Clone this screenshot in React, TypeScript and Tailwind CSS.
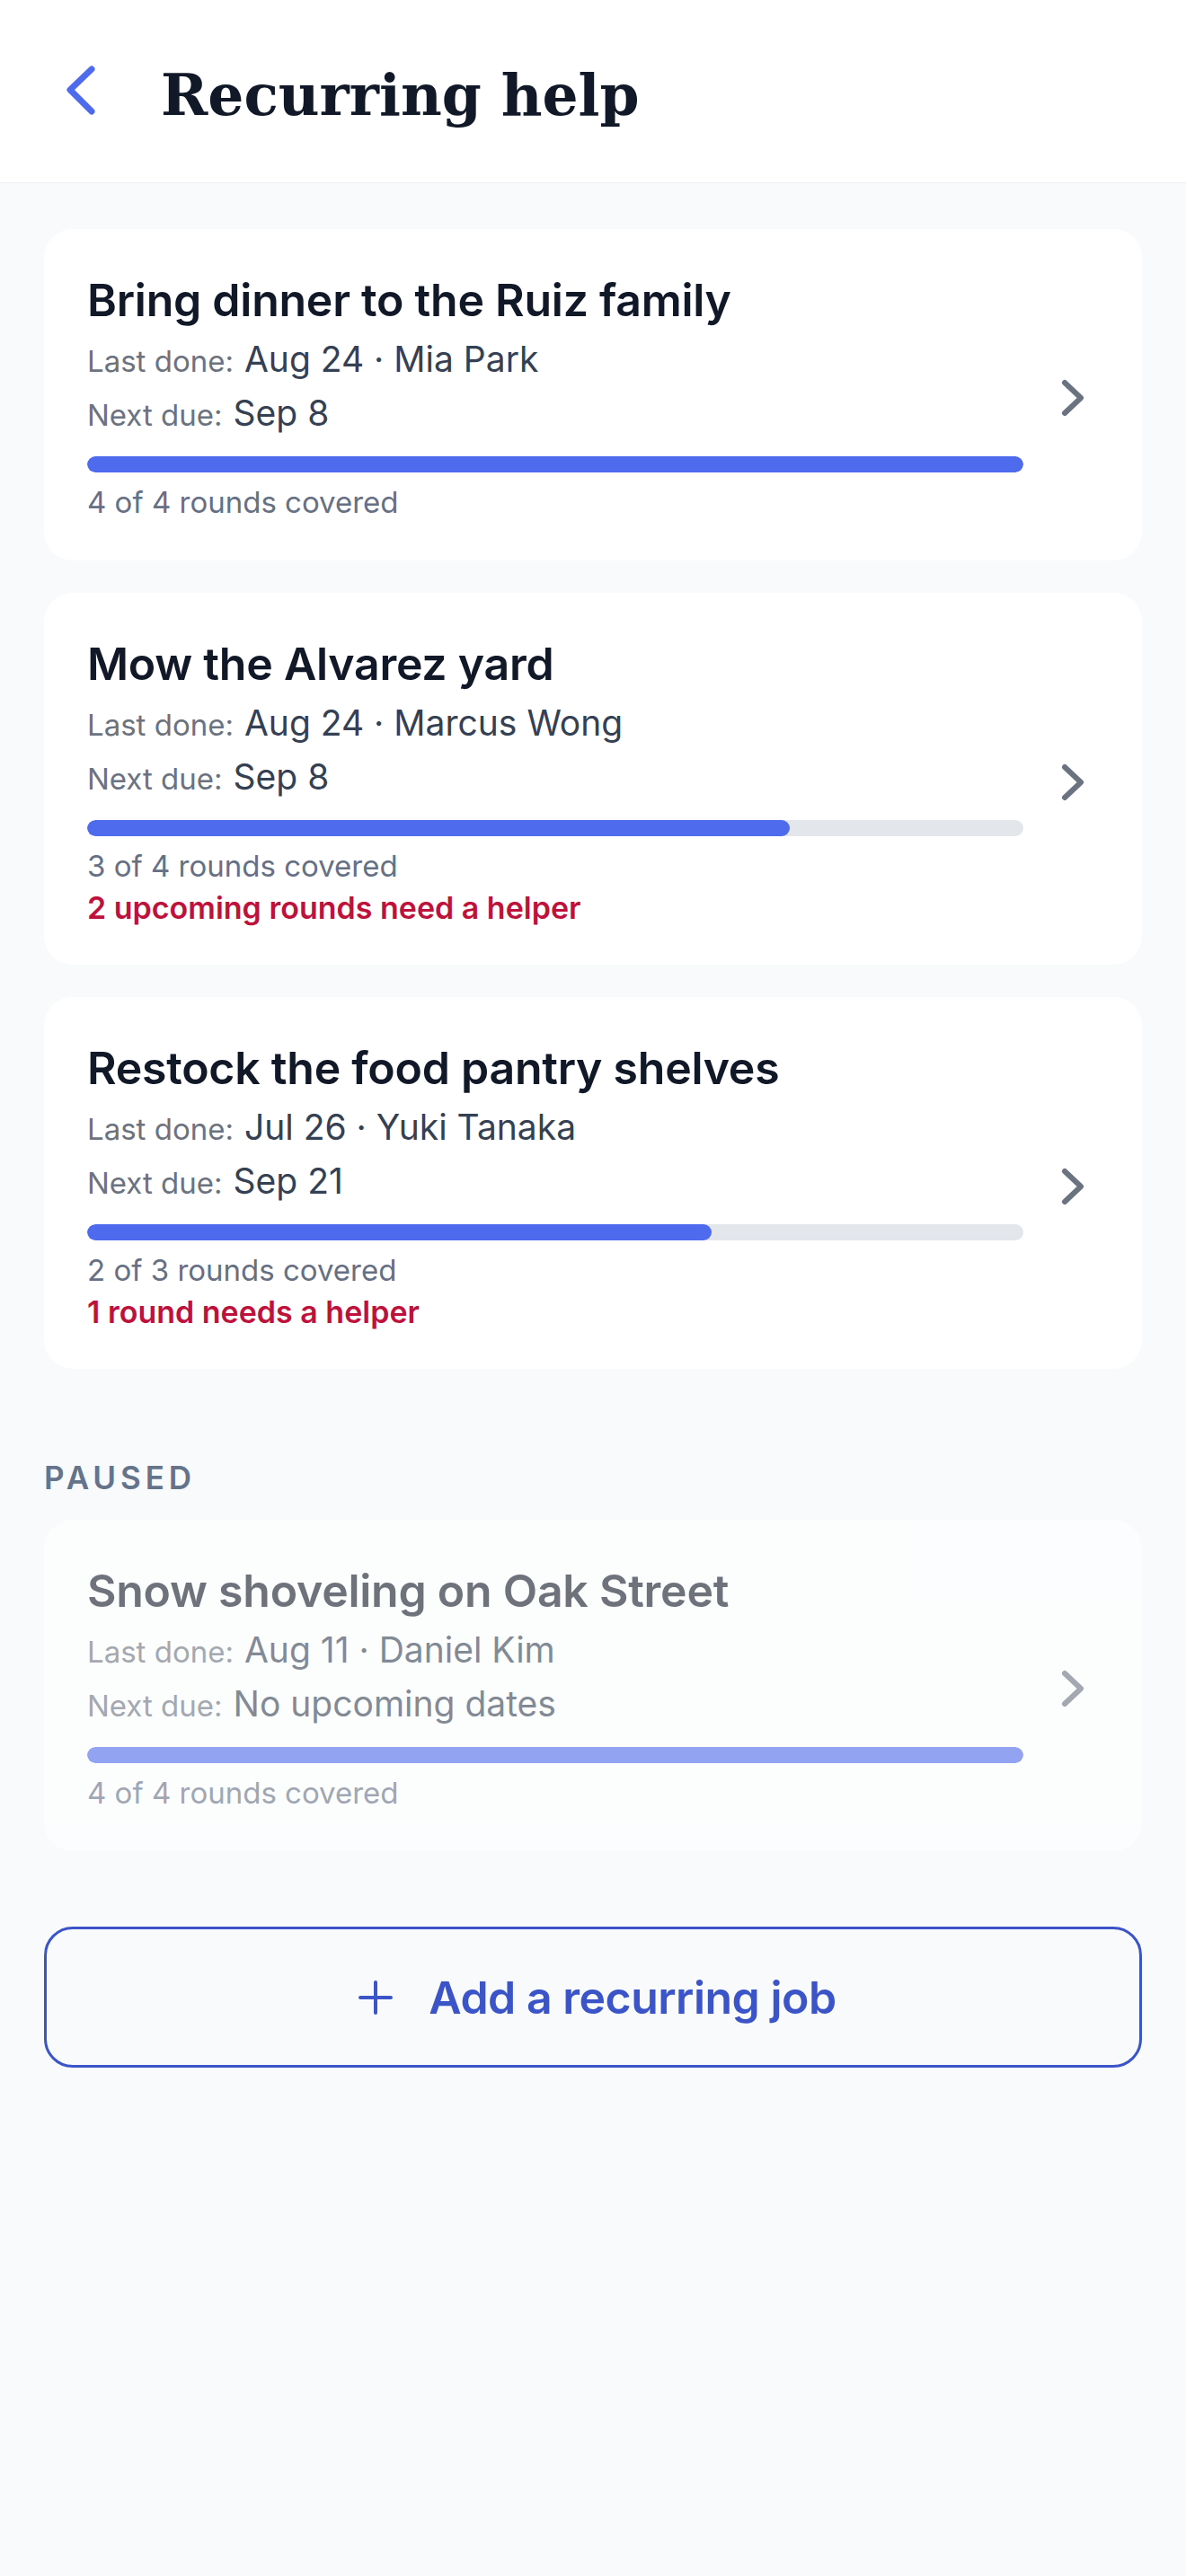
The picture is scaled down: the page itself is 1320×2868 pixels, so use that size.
import React from "react";

type Job = {
  title: string;
  last: string;
  next: string;
  covered: number;
  total: number;
  warn?: string;
};

const active: Job[] = [
  { title: "Bring dinner to the Ruiz family", last: "Aug 24 · Mia Park", next: "Sep 8", covered: 4, total: 4 },
  { title: "Mow the Alvarez yard", last: "Aug 24 · Marcus Wong", next: "Sep 8", covered: 3, total: 4, warn: "2 upcoming rounds need a helper" },
  { title: "Restock the food pantry shelves", last: "Jul 26 · Yuki Tanaka", next: "Sep 21", covered: 2, total: 3, warn: "1 round needs a helper" },
];

const paused: Job[] = [
  { title: "Snow shoveling on Oak Street", last: "Aug 11 · Daniel Kim", next: "No upcoming dates", covered: 4, total: 4 },
];

function Chevron() {
  return (
    <svg width="32" height="48" viewBox="0 0 32 48" className="shrink-0 ml-[39px]" fill="none">
      <path d="M7 7 L25 24 L7 41" stroke="#6b7280" strokeWidth="6" strokeLinecap="round" strokeLinejoin="round" />
    </svg>
  );
}

function Card({ job, dim }: { job: Job; dim?: boolean }) {
  const pct = (job.covered / job.total) * 100;
  return (
    <div className={`flex items-center bg-white rounded-[32px] pl-[48px] pr-[61px] pt-[48px] pb-[41px] ${dim ? "opacity-60" : ""}`}>
      <div className="flex-1 min-w-0">
        <div className="text-[50px] leading-[62px] font-semibold tracking-[-0.005em] text-[#111827]">{job.title}</div>
        <div className="mt-[5px] text-[39px] leading-[60px] text-[#344054]">
          <span className="text-[33px] leading-none text-[#6b7280]">Last done:</span>
          <span className="ml-[12px]">{job.last}</span>
        </div>
        <div className="text-[39px] leading-[60px] text-[#344054]">
          <span className="text-[33px] leading-none text-[#6b7280]">Next due:</span>
          <span className="ml-[12px]">{job.next}</span>
        </div>
        <div className="mt-[18px] h-[18px] rounded-full bg-[#e3e6eb] overflow-hidden">
          <div className="h-full rounded-full bg-[#4f6bed]" style={{ width: `${pct}%` }} />
        </div>
        <div className="mt-[10px] text-[33px] leading-[47px] text-[#667085]">
          {job.covered} of {job.total} rounds covered
        </div>
        {job.warn && (
          <div className="text-[34px] leading-[45px] font-semibold text-[#be123c]">{job.warn}</div>
        )}
      </div>
      <Chevron />
    </div>
  );
}

export default function App() {
  return (
    <div className="min-h-screen bg-[#f8fafc]" style={{ fontFamily: "Inter, 'Liberation Sans', sans-serif" }}>
      <header className="h-[204px] bg-white border-b border-[#eceef2] flex items-start pt-[68px] pl-[68px]">
        <svg width="44" height="64" viewBox="0 0 44 64" fill="none" className="shrink-0">
          <path d="M34 9 L10 32 L34 56" stroke="#4f6bed" strokeWidth="7" strokeLinecap="round" strokeLinejoin="round" />
        </svg>
        <h1
          className="ml-[67px] mt-[2px] text-[63px] leading-[73px] font-bold text-[#111827]"
          style={{ fontFamily: "'DejaVu Serif', 'Liberation Serif', serif" }}
        >
          Recurring help
        </h1>
      </header>

      <main className="px-[49px] pt-[51px] pb-[80px]">
        <div className="flex flex-col gap-[36px]">
          {active.map((j) => (
            <Card key={j.title} job={j} />
          ))}
        </div>

        <div className="mt-[100px] mb-[26px] text-[35px] leading-[42px] font-semibold tracking-[0.14em] text-[#64748b]">
          PAUSED
        </div>
        <div className="flex flex-col gap-[36px]">
          {paused.map((j) => (
            <Card key={j.title} job={j} dim />
          ))}
        </div>

        <button className="mt-[84px] w-full h-[157px] rounded-[32px] border-[3px] border-[#3b55c9] flex items-center justify-center gap-[40px] pl-[10px] text-[#3b55c9]">
          <svg width="38" height="38" viewBox="0 0 38 38" fill="none" className="shrink-0">
            <path d="M19 2 V36 M2 19 H36" stroke="#3b55c9" strokeWidth="4" strokeLinecap="round" />
          </svg>
          <span className="text-[50px] leading-none font-semibold tracking-[-0.01em]">Add a recurring job</span>
        </button>
      </main>
    </div>
  );
}
